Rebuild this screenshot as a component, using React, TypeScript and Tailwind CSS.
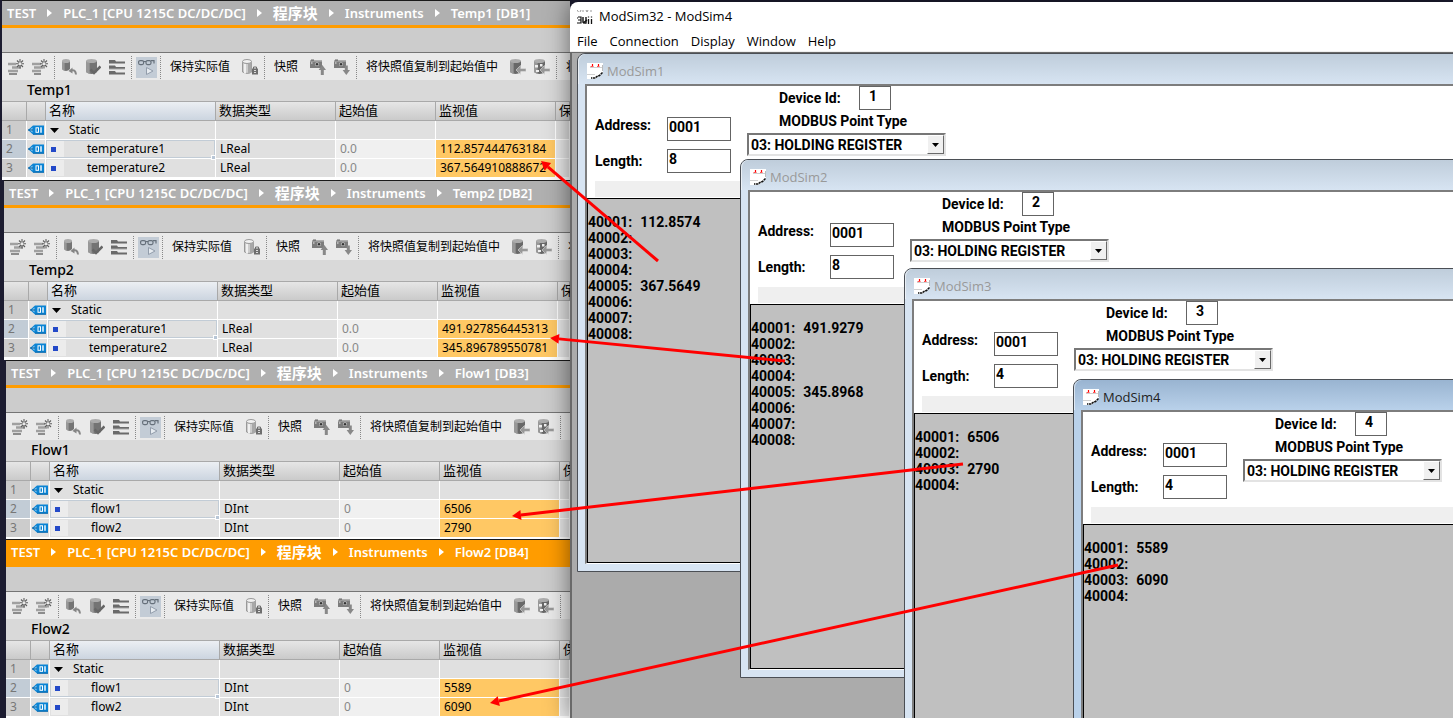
import React from "react";

const cjk = "font-['Noto_Sans','Noto_Sans_CJK_SC',sans-serif]";

type Variable = { name: string; value: string };
type Block = {
  title: string;
  db: string;
  dataType: string;
  start: string;
  rows: Variable[];
  active?: boolean;
  frame: string;
};

const blocks: Block[] = [
  {
    title: "Temp1",
    db: "DB1",
    dataType: "LReal",
    start: "0.0",
    frame: "h-[180px] ml-[2px]",
    rows: [
      { name: "temperature1", value: "112.857444763184" },
      { name: "temperature2", value: "367.564910888672" },
    ],
  },
  {
    title: "Temp2",
    db: "DB2",
    dataType: "LReal",
    start: "0.0",
    frame: "h-[180px] ml-[4px]",
    rows: [
      { name: "temperature1", value: "491.927856445313" },
      { name: "temperature2", value: "345.896789550781" },
    ],
  },
  {
    title: "Flow1",
    db: "DB3",
    dataType: "DInt",
    start: "0",
    frame: "h-[179px] ml-[6px]",
    rows: [
      { name: "flow1", value: "6506" },
      { name: "flow2", value: "2790" },
    ],
  },
  {
    title: "Flow2",
    db: "DB4",
    dataType: "DInt",
    start: "0",
    active: true,
    frame: "h-[180px] ml-[6px]",
    rows: [
      { name: "flow1", value: "5589" },
      { name: "flow2", value: "6090" },
    ],
  },
];

type Sim = {
  id: number;
  length: number;
  place: string;
  active?: boolean;
  values: string[];
};

const sims: Sim[] = [
  { id: 1, length: 8, place: "left-[5px] top-0 h-[519px]", values: ["112.8574", "", "", "", "367.5649", "", "", ""] },
  { id: 2, length: 8, place: "left-[168px] top-[106px] h-[519px]", values: ["491.9279", "", "", "", "345.8968", "", "", ""] },
  { id: 3, length: 4, place: "left-[332px] top-[215px] h-[519px]", values: ["6506", "", "2790", ""] },
  { id: 4, length: 4, place: "left-[501px] top-[326px] h-[519px]", active: true, values: ["5589", "", "6090", ""] },
];

/* ---------- icons ---------- */

function Svg({ children }: { children: React.ReactNode }) {
  return (
    <svg width="16" height="16" viewBox="0 0 16 16" className="shrink-0" aria-hidden="true">
      {children}
    </svg>
  );
}

function InsertRowIcon({ add }: { add?: boolean }) {
  return (
    <Svg>
      <path d={add ? "M0 5h9M2 8.500h9M0 12h9" : "M0 5h8M4 8.500h9M0 12h10"} stroke="#a0a0a0" strokeWidth="2.400" />
      <path d={add ? "M2 15h7" : "M1 15h8"} stroke="#8c8c8c" strokeWidth="2" />
      <path d="M12 0v3.500M12 6v3.500M8 4.700h2.700M13.300 4.700h2.700M9 1.500l2 2M15 1.500l-2 2M9 8l2-2M15 8l-2-2" stroke="#5f5f5f" strokeWidth="1.100" />
    </Svg>
  );
}

function Drum({ x = 0, y = 0, w = 11, h = 14, fill = "#747474", top = "#acacac" }) {
  return (
    <g>
      <path d={`M${x} ${y + 2}v${h - 4}q${w / 2} 4 ${w} 0v-${h - 4}z`} fill={fill} />
      <path d={`M${x} ${y + 2}v${h - 4}q${w / 6} 1.500 ${w / 3} 1.800v-${h - 4}z`} fill="#989898" />
      <ellipse cx={x + w / 2} cy={y + 2} rx={w / 2} ry="2" fill={top} />
    </g>
  );
}

function DrumUndoIcon() {
  return (
    <Svg>
      <Drum x={1} w={8} h={12} />
      <path d="M10 11.500q4.500-1.500 5 4" fill="none" stroke="#858585" strokeWidth="2" />
      <path d="M7.500 12l4-3.500v6z" fill="#858585" />
    </Svg>
  );
}

function DrumCheckIcon() {
  return (
    <Svg>
      <Drum x={1} w={11} h={15} />
      <path d="M5.500 10.500l3.500 3.500 6.500-6.500" fill="none" stroke="#666" strokeWidth="2.600" />
    </Svg>
  );
}

function TreeIcon() {
  return (
    <Svg>
      <path d="M0 1h6l1 1.500h9v2H0zM0 6.500h6l1 1.500h9v2H0zM0 12h6l1 1.500h9v2H0z" fill="#6a6a6a" />
      <path d="M0 4.500h16M0 10h16" stroke="#a8a8a8" strokeWidth="1" />
    </Svg>
  );
}

function MonitorIcon() {
  return (
    <svg width="17" height="17" viewBox="0 0 17 17" aria-hidden="true">
      <rect x="0.600" y="1.600" width="5" height="4" rx="1.500" fill="none" stroke="#66707b" strokeWidth="1.200" />
      <rect x="8" y="1.600" width="5" height="4" rx="1.500" fill="none" stroke="#66707b" strokeWidth="1.200" />
      <path d="M5.500 2.500h2.500M13 1.600h3V4.500" fill="none" stroke="#66707b" strokeWidth="1.200" />
      <path d="M8.500 8.500v7l6.500-3.500z" fill="#e6ebf0" stroke="#929dab" />
    </svg>
  );
}

function DrumLockIcon() {
  return (
    <Svg>
      <path d="M.5 3v10q4.500 3 9 0V3z" fill="#cdcdcd" stroke="#999" />
      <path d="M2 4.500v9.500q1 .5 2 .5V5z" fill="#f0f0f0" />
      <path d="M6 4v11q2-.5 3.500-1.500V3z" fill="#a8a8a8" />
      <ellipse cx="5" cy="2.500" rx="4.500" ry="2" fill="#f1f1f1" stroke="#999" />
      <rect x="10" y="9.500" width="6" height="6" fill="#6e6e6e" />
      <path d="M11.500 10V8h3v2" fill="none" stroke="#6e6e6e" />
      <path d="M12 11.500h2M12 13.500h2" stroke="#ddd" />
    </Svg>
  );
}

function CameraIcon({ down }: { down?: boolean }) {
  return (
    <Svg>
      <path d="M0 1.500h12v7.500H0z" fill="#7c7c7c" />
      <path d="M1 .5h3v1.500H1z" fill="#666" />
      <path d="M0 2.200h12" stroke="#a8a8a8" />
      <path d="M1 3.500h1.500v1H1z" fill="#eee" />
      <circle cx="7" cy="5.300" r="2" fill="#c2c2c2" />
      <circle cx="7" cy="5.300" r="1.200" fill="#333" />
      {down ? (
        <path d="M10.800 6.500h3v4.500H16l-3.700 5L8.600 11h2.200z" fill="#888" />
      ) : (
        <path d="M10.800 16h3v-5H16l-3.700-5L8.600 11h2.200z" fill="#888" />
      )}
    </Svg>
  );
}

function DrumLeftIcon({ partial }: { partial?: boolean }) {
  return (
    <Svg>
      <Drum x={0} w={11} h={15} fill="#686868" />
      {partial && <path d="M1 6h3v2.500H1zM6 5h2.500v2.500H6zM2 11h3v2H2z" fill="#eee" />}
      <path d="M6 11l4.500-4.500v3H16v3h-5.500v3z" fill="#989898" stroke="#dedede" strokeWidth=".6" />
    </Svg>
  );
}

function TagIcon() {
  return (
    <svg width="16" height="10" viewBox="0 0 16 10" aria-hidden="true">
      <path d="M0 5l5-4.500h11v9H5z" fill="#0b84d4" />
      <path d="M1.500 5l3-2.500v5z" fill="#8fcdf2" />
      <path d="M0 5h5" stroke="#075a98" />
      <rect x="8" y="2.800" width="2.500" height="4.500" fill="none" stroke="#fff" />
      <path d="M13 2.300v5.500" stroke="#fff" strokeWidth="1.400" />
      <path d="M5 9.200h11" stroke="#0665a8" />
    </svg>
  );
}

function SheetIcon() {
  return (
    <Svg>
      <path d="M0 0h16v9l-5 5-3 2H0z" fill="#fff" />
      <path d="M3 4.500h12M0 11.500h8" stroke="#d0d0d0" />
      <path d="M15.500 2v6" stroke="#bbb" />
      <path d="M5.500 1v3M11.500 1v3" stroke="#f00" strokeWidth="1.200" />
      <path d="M3.500 3.500h3M10 3.500h2.500" stroke="#f55" />
      <path d="M15.500 9.500l-3 3-2.500 1-2 1.500H4" fill="none" stroke="#111" strokeWidth="1.500" strokeDasharray="2.500 .6" />
    </Svg>
  );
}

function AppIcon() {
  return (
    <Svg>
      <path d="M0 1l1.500 2M3 3l1-2M6 1v2M9 1l1 2 1-2M14 1v2" stroke="#999" fill="none" />
      <path d="M0 9h1M1 8h3v6H0M1 11h3" fill="none" stroke="#111" strokeWidth="1.200" />
      <path d="M6 8v5q1 1.500 3 1V8" fill="none" stroke="#111" strokeWidth="1.400" />
      <path d="M6 14l4-3M11.500 10v5M14.500 10v5M11.500 7.500v1M14.500 7.500v1" stroke="#111" strokeWidth="1.300" />
    </Svg>
  );
}

/* ---------- left side: data block editors ---------- */

function ToolGroup({ children, pad = "pl-[9px] pr-[6px]" }: { children: React.ReactNode; pad?: string }) {
  return (
    <div className={`flex h-[23px] shrink-0 items-center gap-3 border-r border-dotted border-[#888] ${pad}`}>{children}</div>
  );
}

function ToolButton({ label, children }: { label: string; children: React.ReactNode }) {
  return (
    <button type="button" aria-label={label} className="block shrink-0">
      {children}
    </button>
  );
}

function Toolbar() {
  return (
    <div className="flex h-[27px] shrink-0 items-center overflow-hidden whitespace-nowrap bg-[#eaeaea] pt-px text-[12px] leading-4 text-black">
      <ToolGroup pad="px-[6px]">
        <div className="flex gap-2">
          <ToolButton label="插入行"><InsertRowIcon /></ToolButton>
          <ToolButton label="添加行"><InsertRowIcon add /></ToolButton>
        </div>
      </ToolGroup>
      <ToolGroup pad="px-[6px]">
        <div className="flex gap-2">
          <ToolButton label="复位起始值"><DrumUndoIcon /></ToolButton>
          <ToolButton label="更新接口"><DrumCheckIcon /></ToolButton>
          <ToolButton label="展开"><TreeIcon /></ToolButton>
        </div>
      </ToolGroup>
      <ToolGroup pad="pl-1 pr-[3px]">
        <button type="button" aria-label="全部监视" aria-pressed="true" className="flex size-[21px] items-center justify-center bg-[#c3ccd6]">
          <MonitorIcon />
        </button>
      </ToolGroup>
      <ToolGroup>
        <button type="button">保持实际值</button>
        <ToolButton label="锁定"><DrumLockIcon /></ToolButton>
      </ToolGroup>
      <ToolGroup>
        <button type="button">快照</button>
        <div className="flex gap-2">
          <ToolButton label="上传快照"><CameraIcon /></ToolButton>
          <ToolButton label="下载快照"><CameraIcon down /></ToolButton>
        </div>
      </ToolGroup>
      <ToolGroup>
        <button type="button">将快照值复制到起始值中</button>
        <div className="flex gap-2">
          <ToolButton label="复制全部"><DrumLeftIcon /></ToolButton>
          <ToolButton label="复制设定值"><DrumLeftIcon partial /></ToolButton>
        </div>
      </ToolGroup>
      <ToolGroup>
        <button type="button">将起始值加载为实际值</button>
      </ToolGroup>
    </div>
  );
}

function Breadcrumb({ block }: { block: Block }) {
  const crumbs = ["TEST", "PLC_1 [CPU 1215C DC/DC/DC]", "程序块", "Instruments", `${block.title} [${block.db}]`];
  return (
    <nav
      className={`flex h-[27px] shrink-0 items-center whitespace-nowrap border-b-[3px] border-[#ff9c00] pl-[5px] text-[13px] font-semibold leading-5 text-white ${
        block.active ? "bg-[#ff9c00]" : "bg-[#b0b0b0]"
      }`}
    >
      {crumbs.map((c, i) => (
        <React.Fragment key={c}>
          {i > 0 && (
            <svg width="5" height="8" viewBox="0 0 5 8" className="mx-[11px]" aria-hidden="true">
              <path d="M0 0l5 4-5 4z" fill="#fff" />
            </svg>
          )}
          <a href="#" className={i === 2 ? "text-[15px]" : ""}>{c}</a>
        </React.Fragment>
      ))}
    </nav>
  );
}

const head = "h-[20px] border-y border-r border-[#a9a9a9] p-0 pb-[2px] pl-[3px] text-left font-normal text-[13px] leading-4 bg-linear-to-b from-[#e6e6e6] to-[#cacaca]";
const cell = "h-[19px] border-r border-b border-white p-0 pl-[4px] bg-[#e0e0e0]";

function VariableTable({ block }: { block: Block }) {
  return (
    <table className="w-full table-fixed border-separate border-spacing-0 overflow-hidden whitespace-nowrap text-[12px] leading-[18px] text-black">
      <colgroup>
        <col className="w-[25px]" />
        <col className="w-[19px]" />
        <col className="w-[170px]" />
        <col className="w-[120px]" />
        <col className="w-[100px]" />
        <col className="w-[120px]" />
        <col />
      </colgroup>
      <thead>
        <tr>
          <th className={head} />
          <th className={head} />
          <th className="h-[20px] border-y border-r border-[#a9a9a9] bg-linear-to-b from-[#eceff3] to-[#ccd5e0] p-0 pb-[2px] pl-[3px] text-left text-[13px] font-normal leading-4">名称</th>
          <th className={head}>数据类型</th>
          <th className={head}>起始值</th>
          <th className={head}>监视值</th>
          <th className={head}>保持</th>
        </tr>
      </thead>
      <tbody>
        <tr>
          <td className="h-[19px] border-b border-r border-white bg-[#cccccc] p-0 pl-[4px] text-[#777]">1</td>
          <td className="h-[19px] border-b border-r border-white bg-[#e0e0e0] p-0 pl-px"><TagIcon /></td>
          <td className={cell}>
            <div className="flex items-center gap-[9px]">
              <svg width="9" height="5" viewBox="0 0 9 5" aria-hidden="true"><path d="M0 0h9L4.500 5z" fill="#000" /></svg>
              <span className="pl-px">Static</span>
            </div>
          </td>
          <td className={cell} />
          <td className={cell} />
          <td className={cell} />
          <td className={cell} />
        </tr>
        {block.rows.map((r, i) => (
          <tr key={r.name}>
            <td className={`h-[19px] border-b border-r border-white p-0 pl-[4px] text-[#777] ${i === 0 ? "bg-[#c2ccd6]" : "bg-[#cccccc]"}`}>{i + 2}</td>
            <td className="h-[19px] border-b border-r border-white bg-[#e0e0e0] p-0 pl-px"><TagIcon /></td>
            <td className="h-[19px] border-b border-r border-white bg-[#e0e0e0] p-0">
              <div className={`relative flex h-[18px] items-center ${i === 0 ? "border border-[#c2ccd6]" : "border border-transparent"}`}>
                <span className="flex h-full w-[17px] items-center bg-[#ececec] pl-1">
                  <span className="size-[5px] bg-[#2349c8]" />
                </span>
                <span className="pl-[23px]">{r.name}</span>
                {i === 0 && <span className="absolute -bottom-[3px] -right-[2px] z-10 size-[5px] border border-white bg-[#b8c6d6]" />}
              </div>
            </td>
            <td className={cell}>{block.dataType}</td>
            <td className="h-[19px] border-b border-r border-white bg-[#f0f0f0] p-0 pl-[4px] text-[#888]">{block.start}</td>
            <td className="h-[19px] border-b border-r border-white bg-[#ffc864] p-0 pl-[4px]">{r.value}</td>
            <td className="h-[19px] border-b border-r border-white bg-[#e9e9e9] p-0" />
          </tr>
        ))}
      </tbody>
    </table>
  );
}

function BlockPanel({ block }: { block: Block }) {
  return (
    <section className={`flex shrink-0 flex-col overflow-hidden border-t border-[#1a1a1a] bg-white ${block.frame}`}>
      <Breadcrumb block={block} />
      <div className="h-[25px] shrink-0 border-b border-[#757575] bg-[#cccccc]" />
      <Toolbar />
      <h2 className="h-[21px] shrink-0 bg-[#d9d9d9] pl-[25px] text-[14px] font-medium leading-5 text-black">{block.title}</h2>
      <VariableTable block={block} />
    </section>
  );
}

/* ---------- right side: simulator ---------- */

function SimWindow({ sim }: { sim: Sim }) {
  const key = `sim${sim.id}`;
  return (
    <section
      className={`absolute -right-2 flex flex-col rounded-tl-lg border border-[#4b4f55] pb-[7px] pl-[7px] ${sim.place} ${
        sim.active ? "bg-[#b9d1ea]" : "bg-[#d7e4f2]"
      }`}
    >
      <header
        className={`-ml-[7px] flex h-[30px] shrink-0 items-center gap-1 rounded-tl-lg border-l border-white/60 pl-2 pt-1 font-['Open_Sans',sans-serif] text-[13px] leading-5 ${
          sim.active
            ? "bg-linear-to-b from-[#99b4d1] to-[#b9d1ea] text-[#222]"
            : "bg-linear-to-b from-[#bfcddb] to-[#d7e4f2] text-[#999]"
        }`}
      >
        <SheetIcon />
        <h3>ModSim{sim.id}</h3>
      </header>
      <div className="flex min-h-0 flex-1 flex-col border-b border-l-2 border-t-2 border-b-white border-l-[#7d7d7d] border-t-[#7d7d7d] bg-white text-[14px] font-bold leading-4 text-black">
        <form className="shrink-0">
          <div className="flex">
            <div className="flex h-[95px] w-[160px] shrink-0 pl-2 pt-[31px]">
              <div className="flex w-[72px] flex-col gap-5">
                <label htmlFor={`${key}-address`}>Address:</label>
                <label htmlFor={`${key}-length`}>Length:</label>
              </div>
              <div className="flex flex-col gap-2">
                <input id={`${key}-address`} defaultValue="0001" className="h-6 w-16 border border-[#646464] bg-white px-px pb-1" />
                <input id={`${key}-length`} defaultValue={sim.length} className="h-6 w-16 border border-[#646464] bg-white px-px pb-1" />
              </div>
            </div>
            <div className="flex flex-col items-start">
              <div className="flex items-center pl-8">
                <label htmlFor={`${key}-device`} className="w-20">Device Id:</label>
                <input id={`${key}-device`} defaultValue={sim.id} className="h-6 w-8 border border-[#646464] bg-white pb-1 pr-1 text-center" />
              </div>
              <label htmlFor={`${key}-type`} className="mt-[3px] pl-8">MODBUS Point Type</label>
              <div className="relative mt-1 flex border-2 border-b-[#e3e3e3] border-l-[#777] border-r-[#e3e3e3] border-t-[#777]">
                <select id={`${key}-type`} className="h-[19px] w-[195px] appearance-none bg-white pl-[2px]">
                  <option>03: HOLDING REGISTER</option>
                </select>
                <span className="pointer-events-none absolute right-0 top-0 flex h-[19px] w-[17px] items-center justify-center border border-b-[#696969] border-l-white border-r-[#696969] border-t-white bg-[#f0f0f0]">
                  <svg width="7" height="4" viewBox="0 0 7 4" aria-hidden="true"><path d="M0 0h7L3.500 4z" fill="#000" /></svg>
                </span>
              </div>
            </div>
          </div>
          <div className="mb-px ml-2 h-4 bg-[#efefef]" />
        </form>
        <ol className="min-h-0 flex-1 border-b border-l border-t border-black bg-[#c0c0c0] pt-[15px]">
          {sim.values.map((v, i) => (
            <li key={i} className="flex gap-2">
              <span>{40001 + i}:</span>
              <span>{v}</span>
            </li>
          ))}
        </ol>
      </div>
    </section>
  );
}

function Simulator() {
  return (
    <main className="relative z-10 mt-[2px] flex min-w-0 flex-1 flex-col rounded-tl-lg bg-white shadow-[0_0_24px_rgba(0,0,0,0.5)]">
      <header className="flex h-7 shrink-0 items-center gap-[6px] pl-[7px] pt-[2px] font-['Open_Sans',sans-serif] text-[13px] text-black">
        <AppIcon />
        <h1>ModSim32 - ModSim4</h1>
      </header>
      <nav className="flex h-[22px] shrink-0 items-center gap-3 border-b border-[#efefef] pl-[7px] font-['Open_Sans',sans-serif] text-[13px] leading-5 text-black">
        {["File", "Connection", "Display", "Window", "Help"].map((m) => (
          <button key={m} type="button">{m}</button>
        ))}
      </nav>
      <div className="relative min-h-0 flex-1 overflow-hidden border-l-2 border-t border-[#696969] bg-[#ababab] font-['Roboto',sans-serif]">
        {sims.map((s) => (
          <SimWindow key={s.id} sim={s} />
        ))}
      </div>
    </main>
  );
}

/* ---------- annotations ---------- */

const links = [
  [658, 261, 541, 161],
  [785, 361, 550, 338],
  [963, 464, 512, 516],
  [1118, 565, 490, 703],
];

function Arrows() {
  return (
    <svg className="pointer-events-none absolute inset-0 z-20 h-full w-full" aria-hidden="true">
      {links.map(([x1, y1, x2, y2]) => {
        const len = Math.hypot(x2 - x1, y2 - y1);
        const ux = (x2 - x1) / len;
        const uy = (y2 - y1) / len;
        const bx = x2 - ux * 9;
        const by = y2 - uy * 9;
        return (
          <g key={x1} fill="#f00" stroke="#f00">
            <line x1={x1} y1={y1} x2={bx} y2={by} strokeWidth="3" />
            <polygon strokeWidth="0" points={`${x2},${y2} ${bx - uy * 5},${by + ux * 5} ${bx + uy * 5},${by - ux * 5}`} />
          </g>
        );
      })}
    </svg>
  );
}

export default function App() {
  return (
    <div className={`relative flex h-screen overflow-hidden bg-[#1c1c30] ${cjk}`}>
      <div className="flex w-[570px] shrink-0 flex-col overflow-hidden">
        {blocks.map((b) => (
          <BlockPanel key={b.db} block={b} />
        ))}
      </div>
      <Simulator />
      <Arrows />
    </div>
  );
}
